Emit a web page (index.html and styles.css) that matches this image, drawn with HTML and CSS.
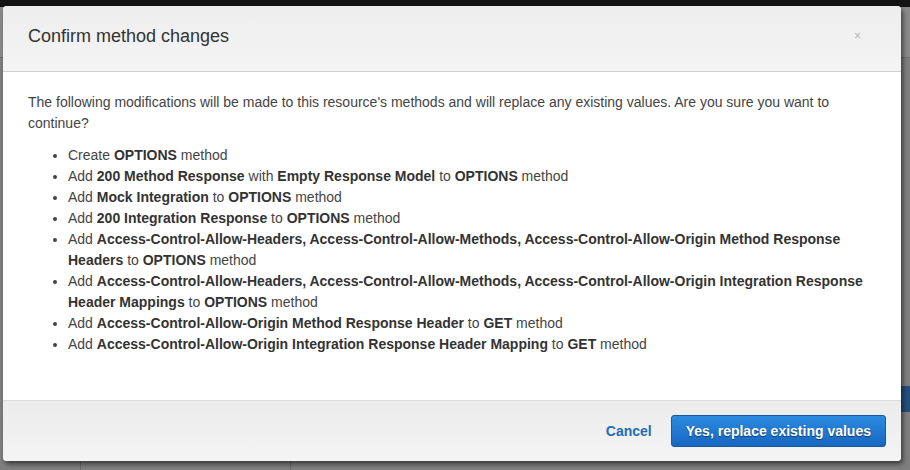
FILE: index.html
```html
<!DOCTYPE html>
<html>
<head>
<meta charset="utf-8">
<link rel="stylesheet" href="styles.css">
</head>
<body>
<div class="page">
  <div class="topbar"></div>
  <div class="backdrop">
    <div class="bg-row"></div>
    <div class="bg-main">
      <div class="bg-col bg-col1"></div>
      <div class="bg-col bg-col2"></div>
      <div class="bg-col bg-col3">
        <div class="bg-btn"></div>
      </div>
    </div>
  </div>
  <div class="modal">
    <div class="modal-header">
      <h2 class="modal-title">Confirm method changes</h2>
      <span class="close">×</span>
    </div>
    <div class="modal-body">
      <p class="intro">The following modifications will be made to this resource's methods and will replace any existing values. Are you sure you want to continue?</p>
      <ul class="changes">
        <li>Create <b>OPTIONS</b> method</li>
        <li>Add <b>200 Method Response</b> with <b>Empty Response Model</b> to <b>OPTIONS</b> method</li>
        <li>Add <b>Mock Integration</b> to <b>OPTIONS</b> method</li>
        <li>Add <b>200 Integration Response</b> to <b>OPTIONS</b> method</li>
        <li>Add <b>Access-Control-Allow-Headers, Access-Control-Allow-Methods, Access-Control-Allow-Origin Method Response Headers</b> to <b>OPTIONS</b> method</li>
        <li>Add <b>Access-Control-Allow-Headers, Access-Control-Allow-Methods, Access-Control-Allow-Origin Integration Response Header Mappings</b> to <b>OPTIONS</b> method</li>
        <li>Add <b>Access-Control-Allow-Origin Method Response Header</b> to <b>GET</b> method</li>
        <li>Add <b>Access-Control-Allow-Origin Integration Response Header Mapping</b> to <b>GET</b> method</li>
      </ul>
    </div>
    <div class="modal-footer">
      <a class="btn-cancel">Cancel</a>
      <button class="btn-primary">Yes, replace existing values</button>
    </div>
  </div>
</div>
</body>
</html>
```
FILE: styles.css
```css
html, body {
  margin: 0;
  padding: 0;
}
body {
  width: 910px;
  height: 470px;
  overflow: hidden;
  background: #7f7f7f;
  font-family: Arial, "Liberation Sans", sans-serif;
}
.page {
  position: relative;
  width: 910px;
  height: 470px;
  display: flex;
  flex-direction: column;
}
.topbar {
  height: 7px;
  background: #141414;
  flex: none;
}
.backdrop {
  flex: 1;
  display: flex;
  flex-direction: column;
}
.bg-row {
  height: 50px;
  background: #8a8a8a;
  border-bottom: 1px solid #6e6e6e;
}
.bg-main {
  flex: 1;
  display: flex;
}
.bg-col {
  border-right: 1px solid #6a6a6a;
}
.bg-col1 { width: 80px; }
.bg-col2 { width: 209px; }
.bg-col3 {
  flex: 1;
  border-right: none;
  display: flex;
  flex-direction: column;
  align-items: flex-end;
  padding-top: 328px;
}
.bg-btn {
  width: 20px;
  height: 26px;
  background: #244f7e;
}
.modal {
  position: absolute;
  left: 3px;
  top: 6px;
  width: 898px;
  height: 455px;
  background: #fff;
  border-radius: 4px;
  box-shadow: 2px 3px 5px rgba(0,0,0,0.55);
  display: flex;
  flex-direction: column;
  overflow: hidden;
}
.modal-header {
  height: 65px;
  flex: none;
  border-bottom: 1px solid #cfcfcf;
  background: linear-gradient(#eeeeee, #f4f4f4);
  display: flex;
  align-items: flex-start;
  justify-content: space-between;
  padding: 0 40px 0 25px;
}
.modal-title {
  margin: 19px 0 0;
  font-size: 18px;
  font-weight: normal;
  color: #333;
  line-height: 22px;
}
.close {
  margin-top: 23px;
  font-size: 12px;
  color: #b5b5b5;
  line-height: 14px;
}
.modal-body {
  flex: 1;
  padding: 20px 25px 0 25px;
  font-size: 14px;
  line-height: 21px;
  color: #444;
}
.intro {
  margin: 0 0 11px;
}
.changes {
  margin: 0;
  padding-left: 40px;
}
.changes b {
  color: #333;
}
.modal-footer {
  height: 60px;
  flex: none;
  border-top: 1px solid #dcdcdc;
  background: linear-gradient(#ececec, #f4f4f4);
  display: flex;
  align-items: center;
  justify-content: flex-end;
  gap: 19px;
  padding-right: 15px;
}
.btn-cancel {
  font-size: 14px;
  font-weight: bold;
  color: #1f6db6;
}
.btn-primary {
  height: 32px;
  padding: 0 14px;
  border: 1px solid #1659a3;
  border-radius: 3px;
  background: linear-gradient(#2c8ae0, #1767c2);
  color: #fff;
  font-family: Arial, "Liberation Sans", sans-serif;
  font-size: 14px;
  font-weight: bold;
  text-shadow: 0 1px 1px rgba(0,0,0,0.5);
}
```
